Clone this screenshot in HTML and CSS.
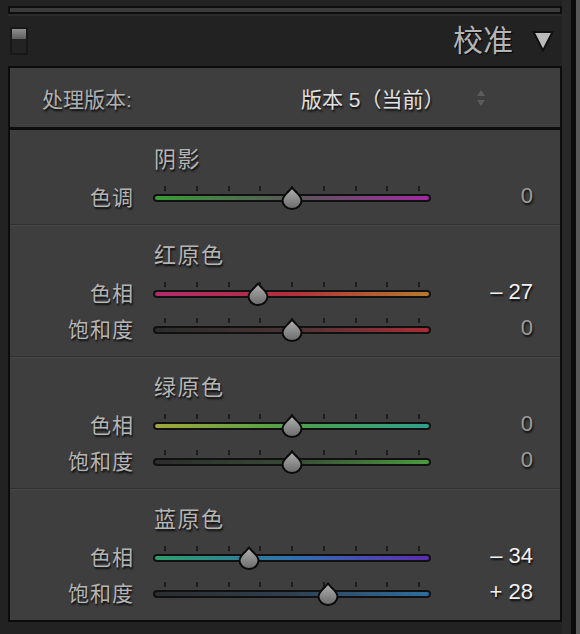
FILE: index.html
```html
<!DOCTYPE html>
<html lang="zh-CN">
<head>
    <meta charset="UTF-8">
    <title>校准</title>
    <link rel="stylesheet" href="styles.css">
</head>
<body>
    <svg class="defs" width="0" height="0">
        <defs>
            <linearGradient id="thumbFill" x1="0" y1="0" x2="0" y2="1">
                <stop offset="0" stop-color="#b2b2b2"/>
                <stop offset="1" stop-color="#6a6a6a"/>
            </linearGradient>
            <symbol id="drop" viewBox="0 0 22 24">
                <path d="M11 1.5 C12.5 4.5 20.5 9 20.5 14.5 A9.5 8.5 0 0 1 1.5 14.5 C1.5 9 9.5 4.5 11 1.5 Z" fill="url(#thumbFill)" stroke="#0a0a0a" stroke-width="2" stroke-linejoin="round"/>
            </symbol>
        </defs>
    </svg>

    <div class="app">
        <div class="main">
            <div class="topbar"></div>

            <header class="head">
                <span class="switch"><span class="switch-knob"></span></span>
                <h2 class="head-title">校准</h2>
                <svg class="caret" width="22" height="22" viewBox="0 0 22 22">
                    <path d="M1.5 2 H20.5 L11 20.5 Z" fill="#bababa" stroke="#101010" stroke-width="2" stroke-linejoin="round"/>
                </svg>
            </header>

            <div class="panel">
                <div class="process">
                    <span class="process-label">处理版本:</span>
                    <span class="process-value">版本 5（当前）</span>
                    <svg class="stepper" width="10" height="18" viewBox="0 0 10 18">
                        <path d="M1 7 L5 1 L9 7 Z M1 11 L9 11 L5 17 Z" fill="#5c5c5c"/>
                    </svg>
                </div>

                <!-- 阴影 -->
                <div class="group">
                    <div class="group-title">阴影</div>
                    <div class="row">
                        <span class="row-label">色调</span>
                        <div class="slider" style="--v: 0">
                            <div class="ticks"><i></i><i></i><i></i><i></i><i></i><i></i><i></i><i></i><i></i></div>
                            <div class="track track-tint"></div>
                            <svg class="thumb"><use href="#drop"/></svg>
                        </div>
                        <span class="row-value zero">0</span>
                    </div>
                </div>

                <!-- 红原色 -->
                <div class="group">
                    <div class="group-title">红原色</div>
                    <div class="row">
                        <span class="row-label">色相</span>
                        <div class="slider" style="--v: -27">
                            <div class="ticks"><i></i><i></i><i></i><i></i><i></i><i></i><i></i><i></i><i></i></div>
                            <div class="track track-red-hue"></div>
                            <svg class="thumb"><use href="#drop"/></svg>
                        </div>
                        <span class="row-value">– 27</span>
                    </div>
                    <div class="row">
                        <span class="row-label">饱和度</span>
                        <div class="slider" style="--v: 0">
                            <div class="ticks"><i></i><i></i><i></i><i></i><i></i><i></i><i></i><i></i><i></i></div>
                            <div class="track track-red-sat"></div>
                            <svg class="thumb"><use href="#drop"/></svg>
                        </div>
                        <span class="row-value zero">0</span>
                    </div>
                </div>

                <!-- 绿原色 -->
                <div class="group">
                    <div class="group-title">绿原色</div>
                    <div class="row">
                        <span class="row-label">色相</span>
                        <div class="slider" style="--v: 0">
                            <div class="ticks"><i></i><i></i><i></i><i></i><i></i><i></i><i></i><i></i><i></i></div>
                            <div class="track track-green-hue"></div>
                            <svg class="thumb"><use href="#drop"/></svg>
                        </div>
                        <span class="row-value zero">0</span>
                    </div>
                    <div class="row">
                        <span class="row-label">饱和度</span>
                        <div class="slider" style="--v: 0">
                            <div class="ticks"><i></i><i></i><i></i><i></i><i></i><i></i><i></i><i></i><i></i></div>
                            <div class="track track-green-sat"></div>
                            <svg class="thumb"><use href="#drop"/></svg>
                        </div>
                        <span class="row-value zero">0</span>
                    </div>
                </div>

                <!-- 蓝原色 -->
                <div class="group">
                    <div class="group-title">蓝原色</div>
                    <div class="row">
                        <span class="row-label">色相</span>
                        <div class="slider" style="--v: -34">
                            <div class="ticks"><i></i><i></i><i></i><i></i><i></i><i></i><i></i><i></i><i></i></div>
                            <div class="track track-blue-hue"></div>
                            <svg class="thumb"><use href="#drop"/></svg>
                        </div>
                        <span class="row-value">– 34</span>
                    </div>
                    <div class="row">
                        <span class="row-label">饱和度</span>
                        <div class="slider" style="--v: 28">
                            <div class="ticks"><i></i><i></i><i></i><i></i><i></i><i></i><i></i><i></i><i></i></div>
                            <div class="track track-blue-sat"></div>
                            <svg class="thumb"><use href="#drop"/></svg>
                        </div>
                        <span class="row-value">+ 28</span>
                    </div>
                </div>
            </div>
        </div>
        <div class="rail"></div>
    </div>
</body>
</html>
```

FILE: styles.css
```css
body {
    margin: 0;
    background-color: #222222;
    font-family: "Liberation Sans", "Noto Sans CJK SC", sans-serif;
}

.defs {
    position: absolute;
    width: 0;
    height: 0;
}

.app {
    display: flex;
    height: 634px;
    overflow: hidden;
}

.main {
    width: 562px;
    padding: 6px 0 0 8px;
    box-sizing: border-box;
}

.rail {
    width: 18px;
    background: linear-gradient(to right, #282828 0 9px, #0b0b0b 9px 14px, #575757 14px);
}

/* top strip */
.topbar {
    height: 8px;
    border: 2px solid #0e0e0e;
    background-color: #3b3b3b;
    box-sizing: border-box;
    box-shadow: 0 2px 0 #2b2b2b;
}

/* panel header */
.head {
    height: 50px;
    margin-top: 2px;
    display: flex;
    align-items: center;
}

.switch {
    width: 18px;
    height: 28px;
    margin-left: 2px;
    padding: 2px;
    background-color: #232323;
    box-shadow: inset 0 0 0 2px #181818;
    box-sizing: border-box;
}

.switch-knob {
    display: block;
    height: 10px;
    background: linear-gradient(#8e8e8e, #5e5e5e);
}

.head-title {
    margin: 0 19px 0 auto;
    font-size: 30px;
    font-weight: normal;
    line-height: 1;
    color: #b4b4b4;
    text-shadow: 1px 1px 1px #000;
}

.caret {
    margin-right: 8px;
}

/* main panel */
.panel {
    border: 2px solid #0c0c0c;
    background-color: #3e3e3e;
}

.process {
    height: 59px;
    border-bottom: 3px solid #0c0c0c;
    display: flex;
    align-items: center;
    padding-left: 32px;
}

.process-label {
    width: 259px;
    font-size: 21px;
    color: #b0b0b0;
    text-shadow: 1px 2px 2px rgba(0,0,0,0.85);
}

.process-value {
    width: 175px;
    font-size: 21px;
    color: #e0e0e0;
    text-shadow: 1px 2px 2px rgba(0,0,0,0.85);
}

.group {
    padding: 12px 0 10px;
}

.group + .group {
    border-top: 1px solid #2f2f2f;
    box-shadow: inset 0 1px 0 #484848;
    padding-top: 13px;
}

.group-title {
    height: 36px;
    line-height: 36px;
    padding-left: 144px;
    font-size: 22px;
    letter-spacing: 1.5px;
    color: #b4b4b4;
    text-shadow: 1px 2px 2px rgba(0,0,0,0.85);
}

.row {
    height: 36px;
    display: flex;
    align-items: center;
}

.row-label {
    width: 124px;
    text-align: right;
    font-size: 21px;
    letter-spacing: 1px;
    color: #b4b4b4;
    text-shadow: 1px 2px 2px rgba(0,0,0,0.85);
}

/* slider */
.slider {
    position: relative;
    width: 278px;
    height: 36px;
    margin-left: 19px;
}

.ticks {
    display: flex;
    justify-content: space-between;
    height: 5px;
    margin-top: 8px;
    padding: 0 11px;
}

.ticks i {
    width: 2px;
    height: 5px;
    background-color: #1c1c1c;
}

.track {
    height: 8px;
    margin-top: 3px;
    border: 2px solid #111;
    border-radius: 4px;
    box-sizing: border-box;
}

.thumb {
    position: absolute;
    top: 8px;
    left: calc(128px + var(--v) * 1.27px);
    width: 22px;
    height: 24px;
}

.track-tint {
    background: linear-gradient(to right, #3a9c38, #585858 50%, #a22aa2);
}

.track-red-hue {
    background: linear-gradient(to right, #b02c6c, #b22f3c 50%, #b47a2c);
}

.track-red-sat {
    background: linear-gradient(to right, #2c2c2c, #4a3434 50%, #aa2c36);
}

.track-green-hue {
    background: linear-gradient(to right, #a0a63a, #4ea04a 50%, #30a08c);
}

.track-green-sat {
    background: linear-gradient(to right, #2c2c2c, #384a36 50%, #4a9a40);
}

.track-blue-hue {
    background: linear-gradient(to right, #2ea06c, #3070b0 50%, #5c2cb0);
}

.track-blue-sat {
    background: linear-gradient(to right, #2c2c2c, #2e4050 50%, #2e6ea0);
}

.row-value {
    width: 102px;
    text-align: right;
    font-size: 22px;
    color: #f0f0f0;
    text-shadow: 1px 2px 2px rgba(0,0,0,0.85);
}

.row-value.zero {
    color: #9c9c9c;
}
```
